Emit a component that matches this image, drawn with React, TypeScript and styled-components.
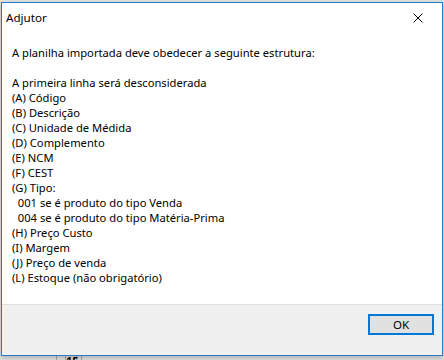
import styled, { createGlobalStyle } from "styled-components";

const GlobalStyle = createGlobalStyle`
  html, body {
    margin: 0;
    padding: 0;
    background: #e4e4e4;
  }
  body {
    font-family: "Noto Sans", "Open Sans", sans-serif;
    font-size: 11.2px;
    color: #000;
  }
`;

const Desktop = styled.div`
  width: 444px;
  height: 360px;
  overflow: hidden;
  padding: 2px 0 0 1px;
  box-sizing: border-box;
  position: relative;
`;

const Window = styled.div`
  width: 442px;
  height: 354px;
  box-sizing: border-box;
  border: 1px solid #2b79c8;
  background: #fff;
  display: flex;
  flex-direction: column;
  box-shadow: 0 2px 6px rgba(0, 0, 0, 0.25);
  position: relative;
  z-index: 1;
`;

const TitleBar = styled.div`
  height: 30px;
  display: flex;
  align-items: center;
  justify-content: space-between;
  padding-left: 4px;
  background: #fff;
`;

const Title = styled.span`
  font-size: 11.6px;
  margin-top: -2px;
`;

const CloseButton = styled.div`
  width: 46px;
  height: 30px;
  display: flex;
  align-items: center;
  justify-content: center;
  margin-right: 1px;
`;

const Content = styled.div`
  flex: 1;
  padding: 12px 0 0 10px;
  white-space: pre;
  line-height: 15px;
`;

const Footer = styled.div`
  height: 41px;
  border-top: 1px solid #dfdfdf;
  background: #f0f0f0;
  display: flex;
  justify-content: flex-end;
  padding: 9px 8px 0 0;
  box-sizing: content-box;
  align-items: flex-start;
`;

const OkButton = styled.button`
  width: 66px;
  height: 21px;
  box-sizing: border-box;
  border: 2px solid #0078d7;
  background: #e1e1e1;
  font-family: inherit;
  font-size: 11.6px;
  padding: 0;
  color: #000;
`;

const Behind = styled.div`
  position: absolute;
  left: 0;
  top: 355px;
  width: 444px;
  height: 5px;
  display: flex;
  overflow: hidden;
`;

const Cell = styled.div<{ $w: number }>`
  width: ${(p) => p.$w}px;
  border-right: 1px solid #a9a9a9;
  font-size: 11px;
  line-height: 11px;
  text-align: center;
  font-weight: bold;
`;

const lines = [
  "A planilha importada deve obedecer a seguinte estrutura:",
  "",
  "A primeira linha será desconsiderada",
  "(A) Código",
  "(B) Descrição",
  "(C) Unidade de Médida",
  "(D) Complemento",
  "(E) NCM",
  "(F) CEST",
  "(G) Tipo:",
  "  001 se é produto do tipo Venda",
  "  004 se é produto do tipo Matéria-Prima",
  "(H) Preço Custo",
  "(I) Margem",
  "(J) Preço de venda",
  "(L) Estoque (não obrigatório)",
];

export default function App() {
  return (
    <>
      <GlobalStyle />
      <Desktop>
        <Window>
          <TitleBar>
            <Title>Adjutor</Title>
            <CloseButton>
              <svg width="10" height="10" viewBox="0 0 10 10">
                <path d="M0.5 0.5 L9.5 9.5 M9.5 0.5 L0.5 9.5" stroke="#000" strokeWidth="1" />
              </svg>
            </CloseButton>
          </TitleBar>
          <Content>{lines.join("\n")}</Content>
          <Footer>
            <OkButton>OK</OkButton>
          </Footer>
        </Window>
        <Behind>
          <Cell $w={56} />
          <Cell $w={8} />
          <Cell $w={10}>15</Cell>
          <Cell $w={4} />
        </Behind>
      </Desktop>
    </>
  );
}
